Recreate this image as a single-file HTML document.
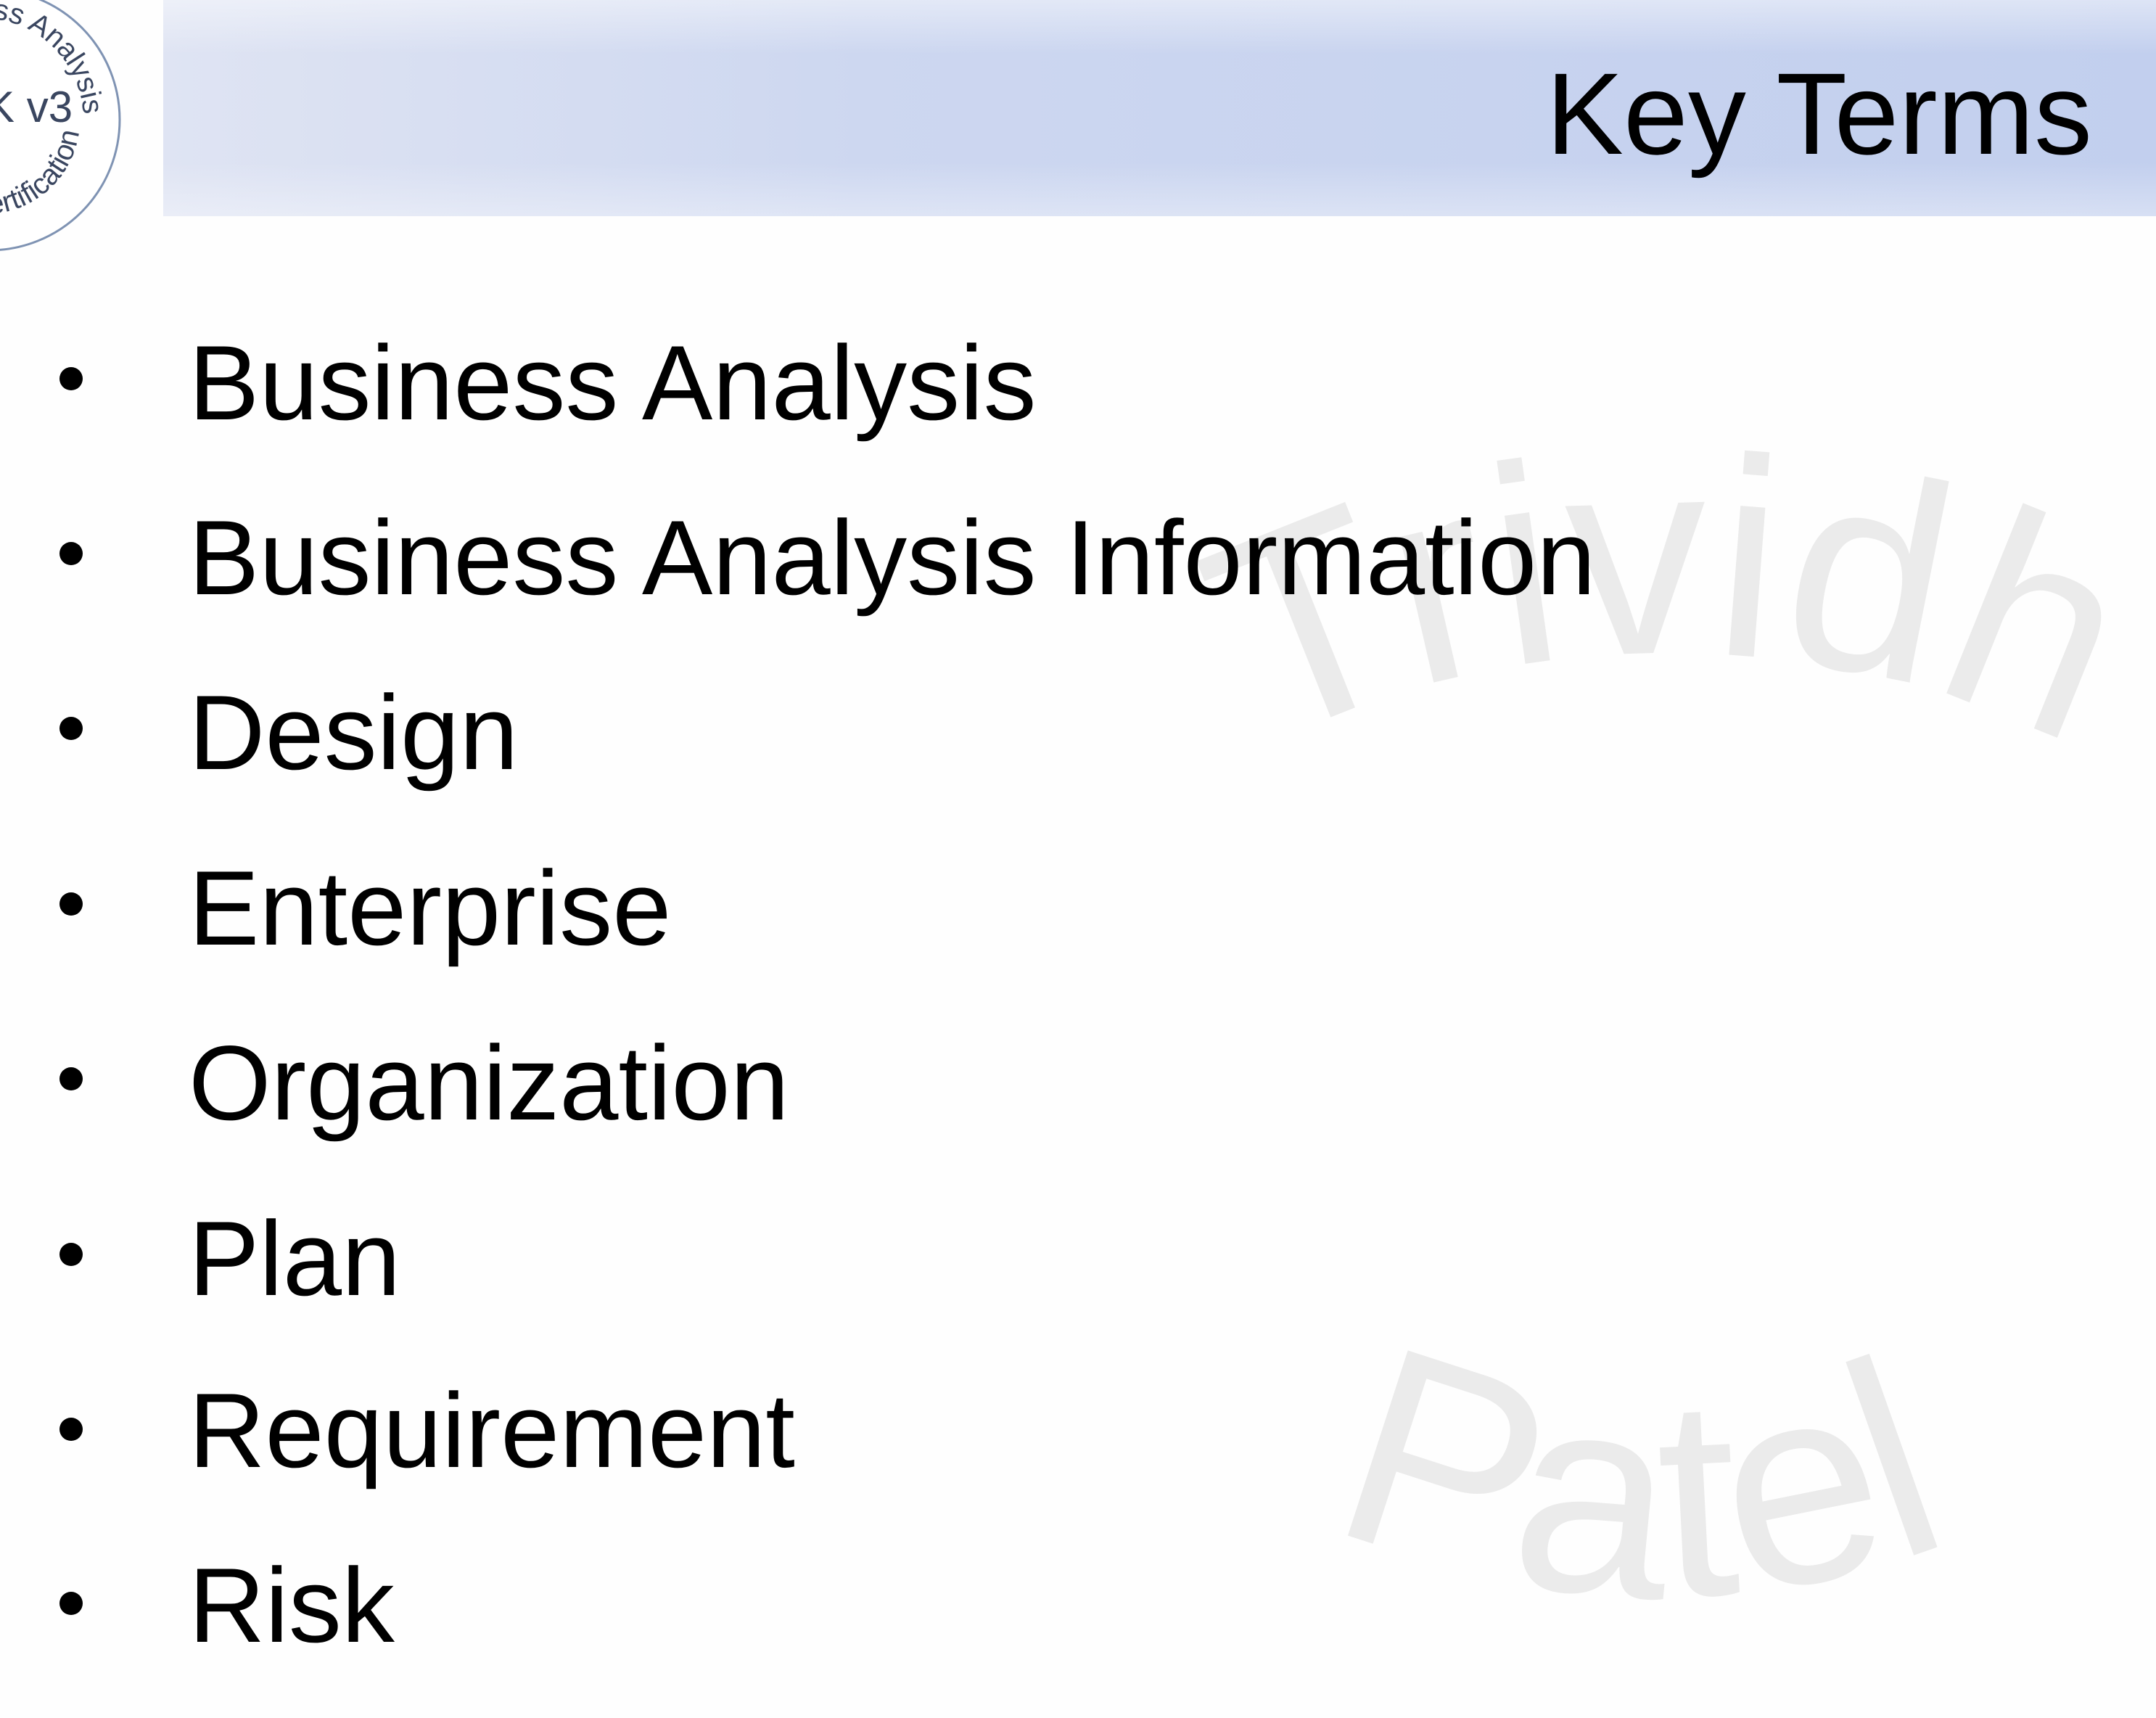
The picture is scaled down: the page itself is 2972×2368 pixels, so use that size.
<!DOCTYPE html>
<html><head><meta charset="utf-8"><style>
html,body{margin:0;padding:0;background:#fff;}
svg{display:block;}
</style></head><body>
<svg width="2972" height="2368" viewBox="0 0 2972 2368" xmlns="http://www.w3.org/2000/svg">
<defs>
<linearGradient id="bg" x1="0" y1="0" x2="1" y2="0">
<stop offset="0" stop-color="#dfe4f3"/>
<stop offset="0.35" stop-color="#cdd7f0"/>
<stop offset="1" stop-color="#c2cfee"/>
</linearGradient>
<linearGradient id="bgv" x1="0" y1="0" x2="0" y2="1">
<stop offset="0" stop-color="#ffffff" stop-opacity="0.45"/>
<stop offset="0.25" stop-color="#ffffff" stop-opacity="0"/>
<stop offset="0.75" stop-color="#ffffff" stop-opacity="0"/>
<stop offset="1" stop-color="#ffffff" stop-opacity="0.35"/>
</linearGradient>
<path id="topArc" d="M1370,1560 A930,660 0 0 1 3230,1560"/>
<path id="botArc" d="M1290,1300 A1000,900 0 0 0 3290,1300"/>
<path id="logoTop" d="M-165,165 A140,140 0 0 1 115,165"/>
<path id="logoBot" d="M-150,165 A130,130 0 0 0 110,165"/>
</defs>
<rect width="2972" height="2368" fill="#fefefe"/>
<rect x="225" y="0" width="2747" height="298" fill="url(#bg)"/>
<rect x="225" y="0" width="2747" height="298" fill="url(#bgv)"/>
<text x="2884" y="212" text-anchor="end" font-family="Liberation Sans, sans-serif" font-size="160" fill="#000">Key Terms</text>
<circle cx="-15" cy="165" r="180" fill="#fff" stroke="#7f93b3" stroke-width="3"/>
<text font-family="Liberation Sans, sans-serif" font-size="40" fill="#3a4660"><textPath href="#logoTop" startOffset="62%" text-anchor="middle">Business Analysis</textPath></text>
<text x="-20" y="168" font-family="Liberation Sans, sans-serif" font-size="60" fill="#3a4660">K v3</text>
<text font-family="Liberation Sans, sans-serif" font-size="40" fill="#3a4660"><textPath href="#logoBot" startOffset="70%" text-anchor="middle">Certification</textPath></text>
<g font-family="Liberation Sans, sans-serif" font-size="390" fill="#ebebeb">
<text><textPath href="#topArc" startOffset="50%" text-anchor="middle">Trividh</textPath></text>
<text><textPath href="#botArc" startOffset="49%" text-anchor="middle">Patel</textPath></text>
</g>
<g fill="#000">
<circle cx="98" cy="522" r="16"/>
<circle cx="98" cy="763" r="16"/>
<circle cx="98" cy="1004" r="16"/>
<circle cx="98" cy="1246" r="16"/>
<circle cx="98" cy="1487" r="16"/>
<circle cx="98" cy="1729" r="16"/>
<circle cx="98" cy="1970" r="16"/>
<circle cx="98" cy="2210" r="16"/>
</g>
<g font-family="Liberation Sans, sans-serif" font-size="146" fill="#000">
<text x="260" y="578">Business Analysis</text>
<text x="260" y="819">Business Analysis Information</text>
<text x="260" y="1060">Design</text>
<text x="260" y="1302">Enterprise</text>
<text x="260" y="1543">Organization</text>
<text x="260" y="1785">Plan</text>
<text x="260" y="2022">Requirement</text>
<text x="260" y="2263">Risk</text>
</g>
</svg>
</body></html>
